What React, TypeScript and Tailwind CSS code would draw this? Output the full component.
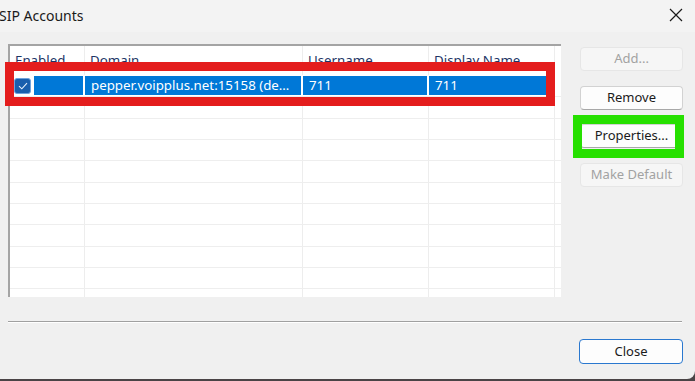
import React from "react";

const cols = [75, 218, 126, 126];

const headers = ["Enabled", "Domain", "Username", "Display Name"];

function WinButton({ label, disabled }: { label: string; disabled?: boolean }) {
    return (
        <div
            className={
                disabled
                    ? "h-[24px] w-[103px] rounded-[4px] border border-[#e6e6e6] bg-[#f6f6f6] text-[#a2a2a2] text-[13px] flex items-center justify-center"
                    : "h-[24px] w-[103px] rounded-[4px] border border-[#d2d2d2] border-b-[#a8a8a8] bg-[#fdfdfd] text-[#1b1b1b] text-[13px] flex items-center justify-center"
            }
        >
            {label}
        </div>
    );
}

export default function App() {
    return (
        <div className="w-[695px] h-[381px] bg-[#4a4446] overflow-hidden font-['Segoe_UI','Noto_Sans',sans-serif]">
            <div className="w-[695px] h-[379px] bg-[#f0f0f0] rounded-br-[8px] flex flex-col relative">
                {/* title bar */}
                <div className="h-[32px] bg-[#f3f3f3] flex items-center justify-between">
                    <span className="text-[14px] text-[#1a1a1a] -ml-[1px] -mt-[1px]">SIP Accounts</span>
                    <svg width="14" height="14" viewBox="0 0 14 14" className="mr-[12px] -mt-[2px]">
                        <path d="M1 1 L13 13 M13 1 L1 13" stroke="#1a1a1a" strokeWidth="1.2" />
                    </svg>
                </div>

                {/* body */}
                <div className="flex pt-[12px] pl-[8px] pr-[12px] gap-[19px]">
                    {/* list view */}
                    <div className="w-[553px] h-[253px] bg-white border-l-2 border-t-2 border-[#a4a4a4] overflow-hidden text-[13.3px]">
                        <div className="flex h-[29px]">
                            {headers.map((h, i) => (
                                <div
                                    key={h}
                                    style={{ width: cols[i] }}
                                    className="h-full border-r border-[#ededed] pl-[5px] pt-[5px] text-[#1d3565] whitespace-nowrap overflow-hidden"
                                >
                                    {h}
                                </div>
                            ))}
                        </div>

                        {/* selected row */}
                        <div className="flex h-[21.33px] py-[1px] pr-[1px]">
                            <div style={{ width: cols[0] }} className="h-full flex items-center border-r-2 border-white">
                                <div className="ml-[4px] mr-[3px] w-[17px] h-[16px] rounded-[3px] bg-[#1a5fad] border border-[#6fa3dc] flex items-center justify-center">
                                    <svg width="10" height="8" viewBox="0 0 10 8">
                                        <path d="M1 4.2 L3.8 6.8 L9 1.2" fill="none" stroke="#e8f1fb" strokeWidth="1.1" />
                                    </svg>
                                </div>
                                <div className="flex-1 h-full bg-[#0078d7]" />
                            </div>
                            {["pepper.voipplus.net:15158 (de\u2026", "711", "711"].map((t, i) => (
                                <div
                                    key={i}
                                    style={{ width: cols[i + 1] }}
                                    className="h-full bg-[#0078d7] border-r-2 border-white text-white pl-[6px] flex items-center whitespace-nowrap overflow-hidden"
                                >
                                    {t}
                                </div>
                            ))}
                        </div>

                        {/* empty rows */}
                        {Array.from({ length: 11 }).map((_, r) => (
                            <div key={r} className="flex h-[21.33px] border-t border-[#eeeeee]">
                                {cols.map((w, i) => (
                                    <div key={i} style={{ width: w }} className="h-full border-r border-[#ededed]" />
                                ))}
                            </div>
                        ))}
                    </div>

                    {/* buttons */}
                    <div className="flex flex-col gap-[14.5px] pt-[3px]">
                        <WinButton label="Add..." disabled />
                        <WinButton label="Remove" />
                        <WinButton label="Properties..." />
                        <WinButton label="Make Default" disabled />
                    </div>
                </div>

                <div className="mt-[24px] ml-[8px] mr-[13px] h-[2px] border-t border-[#a0a0a0] border-b border-b-white" />

                <div className="flex justify-end pr-[12px] mt-[16px]">
                    <div className="h-[25px] w-[104px] rounded-[4px] border-[1.5px] border-[#2a78cf] bg-[#fdfdfd] text-[13px] text-[#1b1b1b] flex items-center justify-center">
                        Close
                    </div>
                </div>

                {/* annotation overlays */}
                <div className="absolute left-[5px] top-[62px] w-[550px] h-[44px] border-[9px] border-[#e41d1d]" />
                <div className="absolute left-[573px] top-[115px] w-[111px] h-[43px] border-[9px] border-[#26e000]" />
            </div>
        </div>
    );
}
